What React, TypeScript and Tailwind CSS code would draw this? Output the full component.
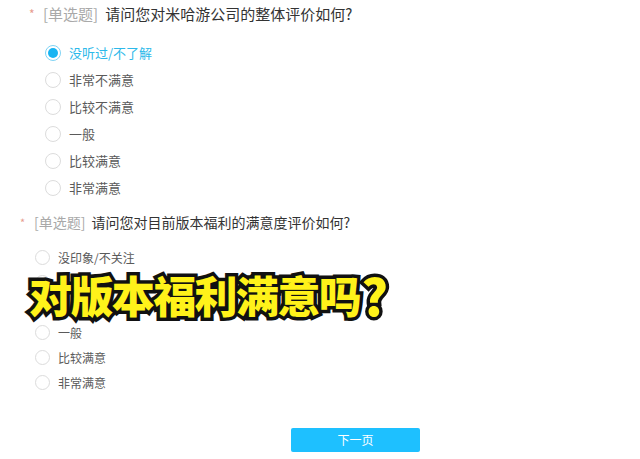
import React from "react";

const q1Options = ["没听过/不了解", "非常不满意", "比较不满意", "一般", "比较满意", "非常满意"];
// rows 2 and 3 sit under the caption, only their radios are kept
const q2Options = ["没印象/不关注", "", "", "一般", "比较满意", "非常满意"];

const font = "font-['Microsoft_YaHei','Noto_Sans_CJK_SC',sans-serif]";

function Radio({ checked, size }: { checked?: boolean; size: "lg" | "sm" }) {
  const dim = size === "lg" ? "w-[16px] h-[16px]" : "w-[15px] h-[15px]";
  if (checked) {
    return (
      <span className={`${dim} rounded-full border border-[#7fd3f5] bg-white flex items-center justify-center shrink-0`}>
        <span className="w-[10px] h-[10px] rounded-full bg-[#17b4f2]" />
      </span>
    );
  }
  return <span className={`${dim} rounded-full border border-[#dcdcdc] bg-white shrink-0`} />;
}

export default function App() {
  return (
    <div className={`relative w-[640px] h-[459px] bg-white overflow-hidden ${font}`}>
      {/* question 1 */}
      <div className="pt-[4px] pl-[29px] flex items-center h-[24px] text-[15px] leading-[20px]">
        <span className="text-[#e79b8f] text-[12px] w-[14px]">*</span>
        <span className="text-[#a9a9a9]">[单选题]</span>
        <span className="ml-[7px] text-[#333]">请问您对米哈游公司的整体评价如何?</span>
      </div>
      <div className="mt-[15px] pl-[45px]">
        {q1Options.map((o, i) => (
          <div key={o} className="h-[27px] flex items-center gap-[8px] text-[13px]">
            <Radio checked={i === 0} size="lg" />
            <span className={i === 0 ? "text-[#2cb9ea]" : "text-[#5a5a5a]"}>{o}</span>
          </div>
        ))}
      </div>

      {/* question 2 */}
      <div className="mt-[11px] pl-[20px] flex items-center h-[20px] text-[14px] leading-[20px]">
        <span className="text-[#e79b8f] text-[11px] w-[14px]">*</span>
        <span className="text-[#a9a9a9]">[单选题]</span>
        <span className="ml-[6px] text-[#333]">请问您对目前版本福利的满意度评价如何?</span>
      </div>
      <div className="mt-[13px] pl-[35px]">
        {q2Options.map((o, i) => (
          <div key={i} className="h-[25px] flex items-center gap-[8px] text-[12px] leading-[16px]">
            <Radio size="sm" />
            {o && <span className="text-[#5a5a5a]">{o}</span>}
          </div>
        ))}
      </div>

      <button className="mt-[33px] ml-[291px] w-[129px] h-[24px] rounded-[2px] bg-[#1ec0ff] text-white text-[12px] flex items-center justify-center">
        下一页
      </button>

      {/* caption overlay */}
      <div className="absolute left-[29px] top-[270px] h-[48px] flex items-center text-[43px] leading-[48px] font-black text-[#fff21a] [-webkit-text-stroke:7px_#111] [paint-order:stroke_fill] whitespace-nowrap">
        <span className="tracking-[-1.6px] h-[48px]">对版本福利满意吗</span>
        <span className="text-[50px] leading-[48px] h-[48px] ml-[1px]">?</span>
      </div>
    </div>
  );
}
